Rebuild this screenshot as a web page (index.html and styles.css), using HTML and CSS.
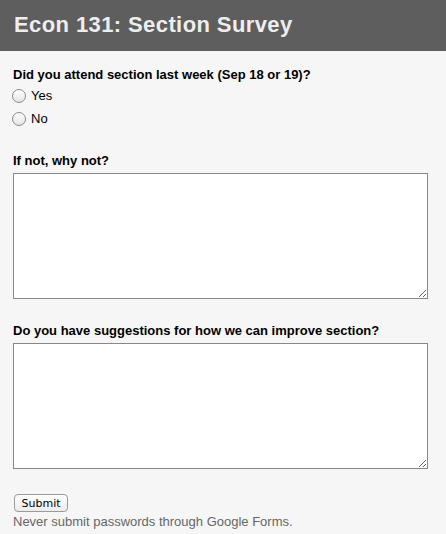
FILE: index.html
```html
<!DOCTYPE html>
<html>
<head>
<meta charset="utf-8">
<link rel="stylesheet" href="styles.css">
</head>
<body>
<header class="top"><h1 class="title">Econ 131: Section Survey</h1></header>
<form class="form">
  <div class="q q-first">
    <div class="label">Did you attend section last week (Sep 18 or 19)?</div>
    <div class="opts">
      <label class="opt"><input type="radio" name="att" class="radio"><span>Yes</span></label>
      <label class="opt"><input type="radio" name="att" class="radio"><span>No</span></label>
    </div>
  </div>
  <div class="q q-second">
    <div class="label">If not, why not?</div>
    <textarea class="area"></textarea>
  </div>
  <div class="q">
    <div class="label">Do you have suggestions for how we can improve section?</div>
    <textarea class="area"></textarea>
  </div>
  <button type="button" class="submit">Submit</button>
  <div class="note">Never submit passwords through Google Forms.</div>
</form>
</body>
</html>
```
FILE: styles.css
```css
html, body {
  margin: 0;
  padding: 0;
  background: #f6f6f6;
  font-family: "Liberation Sans", Arial, sans-serif;
  color: #000;
}
.top {
  height: 51px;
  background: #5e5e5e;
  padding-left: 14px;
  box-sizing: border-box;
}
.title {
  margin: 0;
  font-size: 22px;
  font-weight: bold;
  line-height: 49px;
  letter-spacing: 0.4px;
  color: #eeeeee;
}
.form {
  padding: 0 13px;
  display: flex;
  flex-direction: column;
  align-items: flex-start;
}
.q {
  margin-top: 24px;
  display: flex;
  flex-direction: column;
  align-items: flex-start;
}
.q-first {
  margin-top: 16px;
}
.q-second {
  margin-top: 23px;
}
.label {
  font-size: 13px;
  font-weight: bold;
  line-height: 16px;
  margin-bottom: 4px;
}
.q-first .label {
  margin-bottom: 1px;
}
.opts {
  display: flex;
  flex-direction: column;
}
.opt {
  display: flex;
  align-items: center;
  height: 23px;
  font-size: 13px;
}
.radio {
  appearance: none;
  -webkit-appearance: none;
  width: 14px;
  height: 14px;
  margin: 0 5px 0 -1px;
  border: 1px solid #8a8a8a;
  border-radius: 50%;
  background: linear-gradient(#ffffff, #e4e4e4);
  box-sizing: border-box;
}
.area {
  display: block;
  width: 415px;
  height: 126px;
  box-sizing: border-box;
  border: 1px solid #888;
  background: #fff;
  margin: 0;
  padding: 2px;
  resize: both;
}
.submit {
  margin-top: 25px;
  margin-left: 1px;
  width: 54px;
  height: 18px;
  padding: 0;
  font-family: "DejaVu Sans", "Liberation Sans", sans-serif;
  font-size: 11px;
  color: #000;
  border: 1px solid #9a9a9a;
  border-radius: 4px;
  background: linear-gradient(#ffffff, #ececec);
}
.note {
  margin-top: 2px;
  font-size: 13px;
  line-height: 16px;
  color: #666;
}
```
